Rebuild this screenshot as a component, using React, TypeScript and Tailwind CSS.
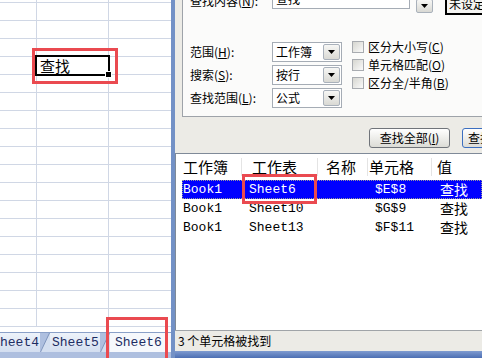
import React from 'react';

const mono = "font-['Liberation_Mono','Noto_Sans_CJK_SC',monospace]";
const cjk = "font-['Noto_Sans_CJK_SC','Liberation_Sans',sans-serif]";

const DropBtn = ({ className = '' }: { className?: string }) => (
  <div className={`flex items-center justify-center border border-[#a9b1bb] rounded-[2px] bg-gradient-to-b from-[#f7f7f5] to-[#d9d9d4] ${className}`}>
    <svg width="7" height="4" viewBox="0 0 7 4">
      <path d="M0 0h7L3.5 4z" fill="#000" />
    </svg>
  </div>
);

const Select = ({ value }: { value: string }) => (
  <div className="w-[70px] h-[20px] border border-[#a5acb5] bg-white flex items-stretch p-[1px]">
    <span className={`flex-1 pl-[2px] text-[12px] leading-[16px] ${cjk}`}>{value}</span>
    <DropBtn className="w-[17px]" />
  </div>
);

const Check = ({ label, k }: { label: string; k: string }) => (
  <div className="h-[18px] flex items-center gap-[4px]">
    <div className="w-[12px] h-[12px] border border-[#a8abb0] bg-gradient-to-br from-[#d6d6d0] to-[#fafafa]" />
    <span className={`text-[12px] ${cjk}`}>
      {label}(<span className="underline">{k}</span>)
    </span>
  </div>
);

const Label = ({ text, k }: { text: string; k: string }) => (
  <span className={`w-[82px] text-[12px] ${cjk}`}>
    {text}(<span className="underline">{k}</span>):
  </span>
);

const rows = [
  { book: 'Book1', sheet: 'Sheet6', cell: '$E$8', val: '查找' },
  { book: 'Book1', sheet: 'Sheet10', cell: '$G$9', val: '查找' },
  { book: 'Book1', sheet: 'Sheet13', cell: '$F$11', val: '查找' },
];

const Slash = () => (
  <svg width="10" height="19" viewBox="0 0 10 19" className="shrink-0">
    <path d="M0 19L10 0V19z" fill="#d3def0" />
    <path d="M0.5 19L9.5 0" stroke="#7f95bd" strokeWidth="1" />
  </svg>
);

export default function App() {
  return (
    <div className={`relative w-[482px] h-[358px] overflow-hidden flex bg-white text-black ${mono}`}>
      {/* worksheet */}
      <div className="w-[171px] shrink-0 flex flex-col">
        <div className="relative flex-1 overflow-hidden">
          <div className="h-[3px] border-b border-[#d0d7e5] flex">
            <div className="w-[37px] border-r border-[#d0d7e5]" />
            <div className="w-[72px] border-r border-[#d0d7e5]" />
          </div>
          {Array.from({ length: 18 }).map((_, i) => (
            <div key={i} className="h-[18px] border-b border-[#d0d7e5] flex">
              <div className="w-[37px] border-r border-[#d0d7e5]" />
              <div className={`w-[72px] border-r border-[#d0d7e5] pl-[3px] text-[15px] leading-[17px] ${cjk}`}>
                {i === 3 ? '查找' : ''}
              </div>
            </div>
          ))}
          <div className="absolute left-[35px] top-[55px] w-[75px] h-[21px] border-2 border-black" />
          <div className="absolute left-[105px] top-[71px] w-[7px] h-[7px] bg-black border border-white" />
        </div>
        <div className="h-[26px] shrink-0 bg-[#aebfdf] border-t border-[#8aa0c8]">
          <div className="h-[19px] flex items-stretch text-[13px] text-[#1d2c62]">
            <div className="w-[40px] shrink-0 bg-gradient-to-b from-[#eef3fa] to-[#d3def0] leading-[19px]">heet4</div>
            <Slash />
            <div className="w-[50px] shrink-0 bg-gradient-to-b from-[#eef3fa] to-[#d3def0] leading-[19px] pl-[2px]">Sheet5</div>
            <Slash />
            <div className="flex-1 bg-[#f6f8fc] leading-[19px] pl-[5px]">Sheet6</div>
          </div>
        </div>
      </div>

      {/* dialog */}
      <div className="flex-1 min-w-0 flex flex-col border-l-4 border-[#7391c6] bg-[#ecebe6]">
        <div className="ml-[7px] h-[117px] shrink-0 bg-[#fbfbfa] border-l border-b border-[#9ea3a9] pl-[7px]">
          <div className="-mt-[12px] h-[24px] flex items-start">
            <span className={`mt-[4px] leading-[18px] w-[82px] shrink-0 text-[12px] ${cjk}`}>
              查找内容(<span className="underline">N</span>):
            </span>
            <div className={`w-[138px] h-[21px] shrink-0 border border-[#a5acb5] bg-white pl-[3px] text-[12px] leading-[19px] ${cjk}`}>查找</div>
            <DropBtn className="ml-[6px] mt-[11px] w-[17px] h-[14px] shrink-0" />
            <div className={`ml-[12px] mt-[5px] w-[80px] h-[22px] shrink-0 border-2 border-black bg-[#f4f4f2] pl-[2px] text-[12px] leading-[18px] whitespace-nowrap ${cjk}`}>
              未设定格式
            </div>
          </div>
          <div className="mt-[26px] flex">
            <div className="pt-[4px] flex flex-col gap-[3px]">
              <div className="h-[20px] flex items-center">
                <Label text="范围" k="H" />
                <Select value="工作簿" />
              </div>
              <div className="h-[20px] flex items-center">
                <Label text="搜索" k="S" />
                <Select value="按行" />
              </div>
              <div className="h-[20px] flex items-center">
                <Label text="查找范围" k="L" />
                <Select value="公式" />
              </div>
            </div>
            <div className="ml-[10px] flex flex-col">
              <Check label="区分大小写" k="C" />
              <Check label="单元格匹配" k="O" />
              <Check label="区分全/半角" k="B" />
            </div>
          </div>
        </div>

        <div className="h-[36px] shrink-0 flex items-start pt-[11px] pl-[194px]">
          <div className={`w-[81px] h-[20px] shrink-0 rounded-[3px] border border-[#70747a] bg-gradient-to-b from-white to-[#dcdcd6] text-center text-[12px] leading-[18px] ${cjk}`}>
            查找全部(<span className="underline">I</span>)
          </div>
          <div className={`ml-[12px] w-[80px] h-[20px] shrink-0 rounded-[3px] border border-[#3c6fc0] bg-gradient-to-b from-white to-[#dcdcd6] pl-[5px] text-[12px] leading-[18px] whitespace-nowrap ${cjk}`}>
            查找下一个
          </div>
        </div>

        <div className="h-[177px] shrink-0 bg-white border-l border-t border-[#7f8a98] pl-[6px]">
          <div className={`h-[26px] flex items-center text-[15px] leading-[18px] ${cjk}`}>
            <div className="w-[60px] shrink-0 pl-[1px] border-r border-[#e4e4e4]">工作簿</div>
            <div className="w-[76px] shrink-0 pl-[10px] border-r border-[#e4e4e4]">工作表</div>
            <div className="w-[50px] shrink-0 pl-[8px] border-r border-[#e4e4e4]">名称</div>
            <div className="w-[64px] shrink-0 pl-[1px] border-r border-[#e4e4e4]">单元格</div>
            <div className="pl-[5px]">值</div>
          </div>
          {rows.map((r, i) => (
            <div
              key={i}
              className={`h-[19px] flex items-center text-[13px] leading-[18px] ${i === 0 ? 'bg-[#0000ff] text-white outline-1 outline-dotted outline-[#9a9a9a] -outline-offset-1' : ''}`}
            >
              <div className="w-[60px] shrink-0 pl-[1px]">{r.book}</div>
              <div className="w-[76px] shrink-0 pl-[7px]">{r.sheet}</div>
              <div className="w-[50px] shrink-0" />
              <div className="w-[64px] shrink-0 pl-[7px]">{r.cell}</div>
              <div className={`pl-[8px] text-[14px] leading-[17px] ${cjk}`}>{r.val}</div>
            </div>
          ))}
        </div>

        <div className={`h-[21px] shrink-0 border-t border-[#a0a4a8] pl-[3px] flex items-center text-[12px] ${cjk}`}>
          3 个单元格被找到
        </div>
        <div className="h-[7px] shrink-0 bg-gradient-to-b from-[#7f9bd0] to-[#4d6fb3]" />
      </div>

      {/* red annotation boxes */}
      <div className="absolute left-[32px] top-[48px] w-[86px] h-[36px] border-[3px] border-[#ea4a50]" />
      <div className="absolute left-[242px] top-[174px] w-[75px] h-[30px] border-[3px] border-[#ea4a50]" />
      <div className="absolute left-[106px] top-[317px] w-[62px] h-[48px] border-[3px] border-[#ea4a50]" />
    </div>
  );
}
